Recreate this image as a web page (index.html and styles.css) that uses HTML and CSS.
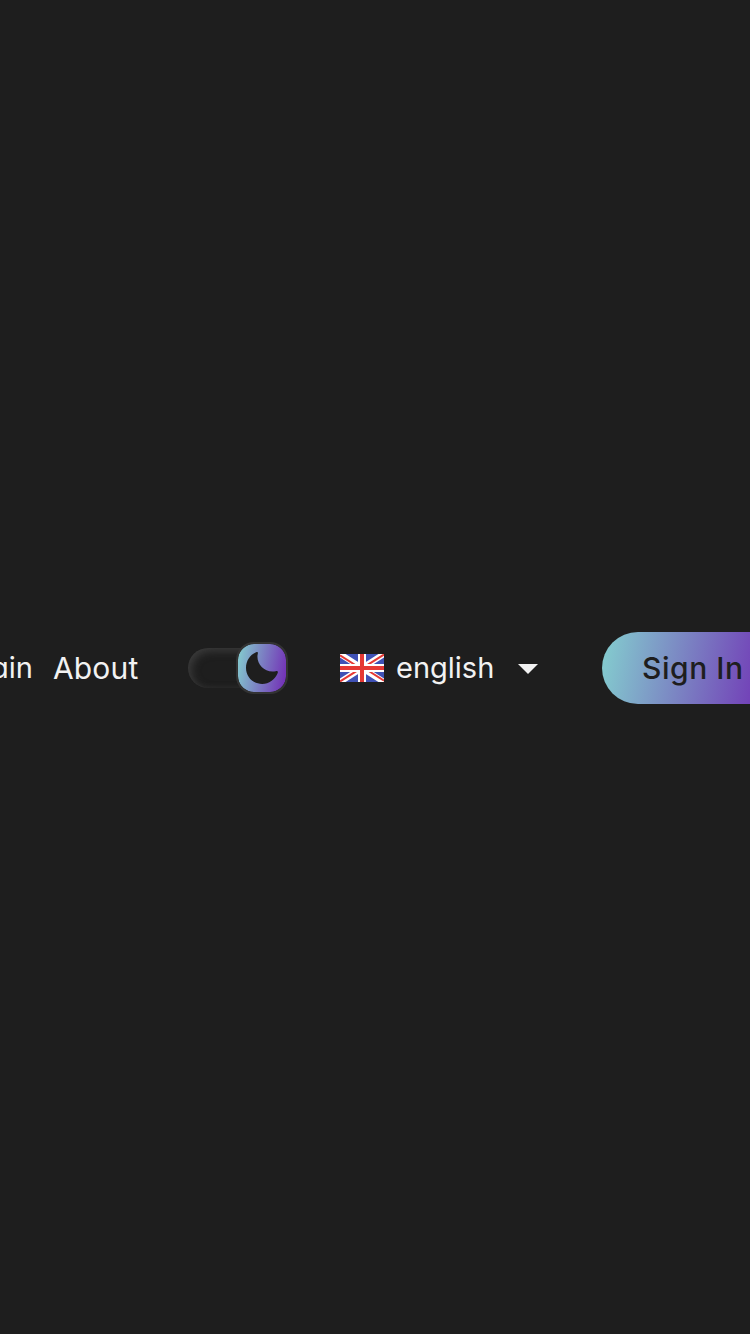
FILE: index.html
```html
<!DOCTYPE html>
<html lang="en">
<head>
<meta charset="utf-8">
<title>Main</title>
<link rel="stylesheet" href="styles.css">
</head>
<body>
<header class="bar">
  <nav class="nav">
    <a class="link link-main">Main</a>
    <a class="link link-about">About</a>
  </nav>
  <div class="toggle">
    <span class="thumb">
      <svg class="moon" viewBox="0 0 34 34"><path d="M11.200 1.200C12.500 .6 13.200 1.500 12.800 2.700C10.500 12.500 19.500 22.600 30.800 20.200C32.800 19.800 33.300 21 32.500 22.600C29.700 28.800 24 33 17.200 33C8.200 33 1 26 1 17C1 9.800 5 3.800 11.200 1.200Z" fill="#1e1e1e"/></svg>
    </span>
  </div>
  <div class="language">
    <svg class="flag" viewBox="0 0 44 28">
      <path fill="#3f51b5" d="M0 0h44v28H0z"/>
      <path stroke="#fff" stroke-width="6" d="M0 0l44 28M44 0L0 28"/>
      <path stroke="#e53935" stroke-width="2" d="M0 1.300L20 14M44 26.700L24 14M44 .5L24 13.200M0 27.500L20 14.800"/>
      <path fill="#fff" d="M18 0h8v28h-8zM0 10h44v8H0z"/>
      <path fill="#e53935" d="M20 0h4v28h-4zM0 12h44v4H0z"/>
    </svg>
    <span class="language-name">english</span>
    <svg class="caret" viewBox="0 0 20 10"><path d="M0 0h20L10 10z" fill="#f2f2f2"/></svg>
  </div>
  <button class="sign-in"><span class="sign-in-text">Sign In</span></button>
</header>
</body>
</html>
```
FILE: styles.css
```css
body {
  margin: 0;
  height: 100vh;
  display: flex;
  align-items: center;
  overflow: hidden;
  background: #1e1e1e;
  color: #f2f2f2;
  font: 400 29px/40px Inter, "Liberation Sans", sans-serif;
  font-feature-settings: "cv11";
}

.bar {
  display: flex;
  align-items: center;
  flex: none;
  height: 72px;
  margin: 2px 0 0 -36px;
  white-space: nowrap;
}

.nav {
  display: flex;
  gap: 20px;
  width: 224px;
}

.link {
  flex: none;
}

.link-main {
  width: 69px;
  display: flex;
  justify-content: flex-end;
}

.link-about {
  font-size: 30px;
  letter-spacing: 0.15px;
}

.toggle {
  box-sizing: border-box;
  display: flex;
  align-items: center;
  justify-content: flex-end;
  flex: none;
  width: 100px;
  height: 40px;
  border-radius: 20px;
  box-shadow: inset 3px 3px 8px #3c3c3c, inset -2px -2px 4px #222;
}

.thumb {
  box-sizing: border-box;
  display: flex;
  align-items: center;
  justify-content: center;
  flex: none;
  width: 52px;
  height: 52px;
  border: 2px solid #333;
  border-radius: 18px;
  background: linear-gradient(100deg, #84cfcf, #7229b5) padding-box;
}

.moon {
  width: 34px;
  height: 34px;
}

.language {
  display: flex;
  align-items: center;
  flex: none;
  width: 262px;
  margin-left: 52px;
}

.flag {
  width: 44px;
  height: 28px;
  margin-right: 12px;
}

.language-name {
  width: 122px;
}

.caret {
  width: 20px;
  height: 10px;
  margin-top: 2px;
}

.sign-in {
  flex: none;
  width: 182px;
  height: 72px;
  padding: 0 0 0 40px;
  border: 0;
  border-radius: 36px;
  background: linear-gradient(100deg, #84cfcf, #6f25b3);
  color: #1e1e1e;
  font: 500 30px/40px Inter, "Liberation Sans", sans-serif;
  letter-spacing: 0.55px;
  text-align: left;
}
```
